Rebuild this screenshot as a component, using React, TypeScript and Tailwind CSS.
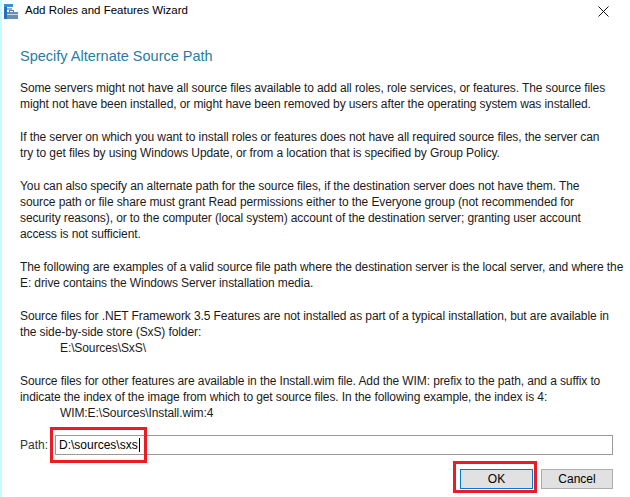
import React, { FC, ReactElement } from 'react';

const WizardIcon: FC = (): ReactElement => (
  <svg width="14" height="15" viewBox="0 0 14 15" xmlns="http://www.w3.org/2000/svg">
    <rect x="0" y="0" width="3" height="15" fill="#1e74c0" />
    <rect x="0" y="0" width="9" height="3" fill="#3a8fd6" />
    <rect x="3" y="4" width="5" height="2" fill="#7fb6e6" />
    <rect x="5.5" y="6.5" width="4" height="2" fill="none" stroke="#5b7f9e" strokeWidth="1" />
    <rect x="3" y="8" width="11" height="7" fill="#6a8fb0" />
    <rect x="3" y="10" width="11" height="1" fill="#c9d9e8" />
  </svg>
);

const Paragraph: FC<{ lines: string[]; indent?: number[] }> = ({ lines, indent = [] }): ReactElement => (
  <div className="mt-[17px] whitespace-nowrap">
    {lines.map((l, i) => (
      <div key={i} className={indent.includes(i) ? 'pl-[40px]' : ''}>
        {l}
      </div>
    ))}
  </div>
);

const App: FC = (): ReactElement => {
  return (
    <div
      className="w-[630px] h-[497px] bg-white border-l-2 border-[#c6fbff] overflow-hidden text-[#1b1b1b] relative"
      style={{ fontFamily: '"Segoe UI", "Liberation Sans", Arial, sans-serif' }}
    >
      {/* title bar */}
      <div className="h-[22px] flex items-center">
        <div className="ml-[2px] mt-[1px] flex items-center">
          <WizardIcon />
        </div>
        <span className="ml-[7px] text-[11.5px] text-black">Add Roles and Features Wizard</span>
        <div className="ml-auto mr-[21px]">
          <svg width="11" height="11" viewBox="0 0 11 11">
            <path d="M0.5 0.5 L10.5 10.5 M10.5 0.5 L0.5 10.5" stroke="#111" strokeWidth="1" />
          </svg>
        </div>
      </div>

      <div className="pl-[18px] pr-[17px]">
        <h1 className="mt-[24px] text-[14.5px] leading-[20px] text-[#2a7ba1]">Specify Alternate Source Path</h1>

        <div className="text-[12px] leading-[16px] tracking-[-0.1px] -mt-[3px]">
          <Paragraph
            lines={[
              'Some servers might not have all source files available to add all roles, role services, or features. The source files',
              'might not have been installed, or might have been removed by users after the operating system was installed.',
            ]}
          />
          <Paragraph
            lines={[
              'If the server on which you want to install roles or features does not have all required source files, the server can',
              'try to get files by using Windows Update, or from a location that is specified by Group Policy.',
            ]}
          />
          <Paragraph
            lines={[
              'You can also specify an alternate path for the source files, if the destination server does not have them. The',
              'source path or file share must grant Read permissions either to the Everyone group (not recommended for',
              'security reasons), or to the computer (local system) account of the destination server; granting user account',
              'access is not sufficient.',
            ]}
          />
          <Paragraph
            lines={[
              'The following are examples of a valid source file path where the destination server is the local server, and where the',
              'E: drive contains the Windows Server installation media.',
            ]}
          />
          <Paragraph
            lines={[
              'Source files for .NET Framework 3.5 Features are not installed as part of a typical installation, but are available in',
              'the side-by-side store (SxS) folder:',
              'E:\\Sources\\SxS\\',
            ]}
            indent={[2]}
          />
          <Paragraph
            lines={[
              'Source files for other features are available in the Install.wim file. Add the WIM: prefix to the path, and a suffix to',
              'indicate the index of the image from which to get source files. In the following example, the index is 4:',
              'WIM:E:\\Sources\\Install.wim:4',
            ]}
            indent={[2]}
          />
        </div>

        {/* path row */}
        <div className="relative mt-[14px] flex items-center h-[20px] text-[12px]">
          <span className="w-[35px] text-[#333]">Path:</span>
          <div className="flex-1 h-[20px] border border-[#9a9a9a] flex items-center pl-[3px] text-[12px] text-black">
            D:\sources\sxs
            <span className="inline-block w-px h-[14px] bg-black ml-px" />
          </div>
          <div className="absolute left-[30px] top-[-8px] w-[97px] h-[36px] border-[3px] border-[#ec1c24]" />
        </div>

        {/* buttons */}
        <div className="relative mt-[14px] flex justify-end gap-[8px] text-[12px]">
          <button className="w-[73px] h-[20px] bg-[#e1e1e1] border border-[#0078d7] text-black leading-[18px]">OK</button>
          <button className="w-[72px] h-[20px] bg-[#e1e1e1] border border-[#adadad] text-black leading-[18px]">Cancel</button>
          <div className="absolute right-[76px] top-[-8px] w-[84px] h-[32px] border-[3px] border-[#ec1c24]" />
        </div>
      </div>
    </div>
  );
};

export default App;
